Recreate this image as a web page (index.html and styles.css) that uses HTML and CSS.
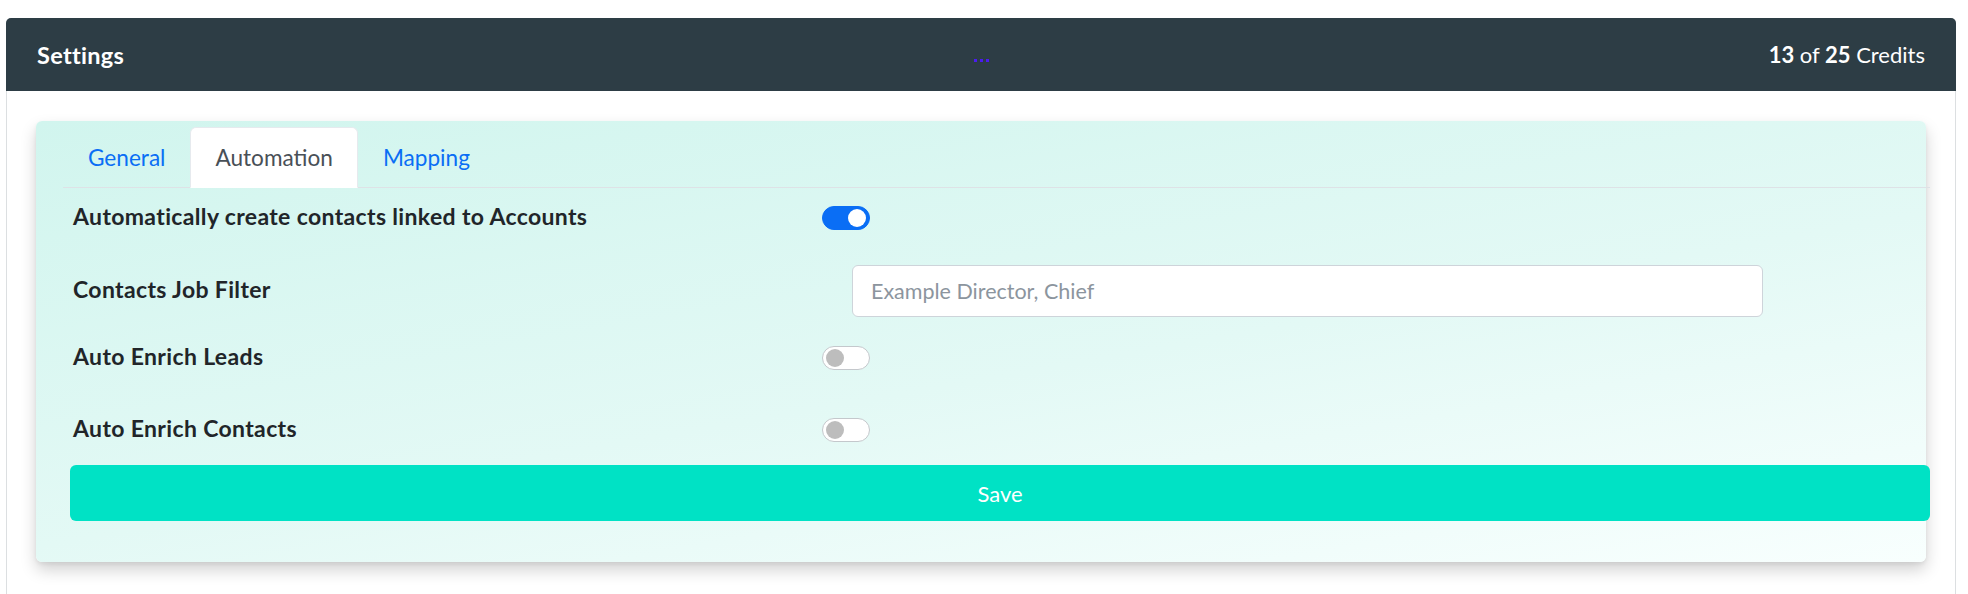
FILE: index.html
```html
<!DOCTYPE html>
<html lang="en">
<head>
    <meta charset="UTF-8">
    <meta name="viewport" content="width=device-width, initial-scale=1.0">
    <title>Settings</title>
    <link rel="stylesheet" href="styles.css">
</head>
<body>
    <div class="card">
        <div class="card-header">
            <span class="title">Settings</span>
            <span class="loader"><i></i><i></i><i></i></span>
            <span class="credits"><b>13</b> of <b>25</b> Credits</span>
        </div>
        <div class="card-body">
            <div class="panel">
                <div class="panel-content">
                    <ul class="tabs">
                        <li><a class="tab" href="#">General</a></li>
                        <li><a class="tab active" href="#">Automation</a></li>
                        <li><a class="tab" href="#">Mapping</a></li>
                    </ul>
                    <div class="field field-contacts">
                        <label>Automatically create contacts linked to Accounts</label>
                        <label class="switch"><input type="checkbox" checked><span class="slider"></span></label>
                    </div>
                    <div class="field field-filter">
                        <label for="jobFilter">Contacts Job Filter</label>
                        <input type="text" id="jobFilter" class="text-input" placeholder="Example Director, Chief">
                    </div>
                    <div class="field field-leads">
                        <label>Auto Enrich Leads</label>
                        <label class="switch"><input type="checkbox"><span class="slider"></span></label>
                    </div>
                    <div class="field field-enrich">
                        <label>Auto Enrich Contacts</label>
                        <label class="switch"><input type="checkbox"><span class="slider"></span></label>
                    </div>
                    <button class="save-button">Save</button>
                </div>
            </div>
        </div>
    </div>
</body>
</html>
```
FILE: styles.css
```css
body {
    margin: 0;
    padding: 18px 12px 0 6px;
    font-family: Lato, "Open Sans", sans-serif;
    font-size: 22px;
    background-color: #fff;
    color: #212529;
}
.card {
    border: 1px solid #dcdfe1;
    border-radius: 5px;
}
.card-header {
    margin: -1px -1px 0 -1px;
    height: 73px;
    box-sizing: border-box;
    padding: 0 31px;
    display: grid;
    grid-template-columns: 1fr auto 1fr;
    align-items: center;
    background-color: #2d3d45;
    color: #fff;
    border-radius: 5px 5px 0 0;
}
.title {
    font-weight: bold;
    font-size: 23.5px;
    letter-spacing: 0.3px;
}
.credits {
    justify-self: end;
}
.loader {
    display: flex;
    gap: 3px;
    margin-top: 11px;
}
.loader i {
    width: 3px;
    height: 3px;
    background-color: #4b1cf0;
}
.card-body {
    padding: 30px 29px 40px;
}
.panel {
    padding: 6px 0 41px 27px;
    border-radius: 6px;
    background: linear-gradient(170deg, #d1f5ee 0%, #e3f9f5 55%, #f8fffe 100%);
    box-shadow: 0 8px 16px rgba(0,0,0,0.18), 0 2px 4px rgba(0,0,0,0.06);
}
.panel-content {
    margin-right: -4px;
}
.tabs {
    list-style: none;
    margin: 0 0 12px 0;
    padding: 0;
    display: flex;
    border-bottom: 1px solid #dee2e6;
    font-size: 22.6px;
}
.tab {
    display: block;
    height: 61px;
    box-sizing: border-box;
    margin-bottom: -1px;
    padding: 0 24px;
    line-height: 59px;
    border: 1px solid transparent;
    border-radius: 6px 6px 0 0;
    color: #0a6ef5;
    text-decoration: none;
}
.tab.active {
    background-color: #fff;
    color: #495057;
    border-color: #e6eaee #e6eaee #fff;
}
.field {
    display: grid;
    grid-template-columns: 749px 1fr;
    align-items: center;
    padding-left: 10px;
    height: 36px;
    font-weight: bold;
    font-size: 23px;
    letter-spacing: 0.35px;
}
.field label:first-child {
    margin-bottom: 4px;
}
.field-filter {
    margin-top: 29px;
    height: 52px;
}
.field-leads {
    margin-top: 23px;
}
.field-enrich {
    margin-top: 36px;
}
.text-input {
    margin-left: 30px;
    width: 911px;
    height: 52px;
    box-sizing: border-box;
    padding: 0 18px;
    border: 1px solid #ced4da;
    border-radius: 6px;
    background-color: #fff;
    font-family: inherit;
    font-size: 21.5px;
    font-weight: normal;
    letter-spacing: 0;
    color: #495057;
}
.text-input::placeholder {
    color: #8c959e;
}
.switch {
    position: relative;
    display: block;
    width: 48px;
    height: 24px;
}
.switch input {
    display: none;
}
.slider {
    position: absolute;
    inset: 0;
    box-sizing: border-box;
    border: 1px solid #c4c8cc;
    border-radius: 12px;
    background-color: #fff;
}
.slider::before {
    content: "";
    position: absolute;
    left: 3px;
    top: 2px;
    width: 18px;
    height: 18px;
    border-radius: 50%;
    background-color: #bdbdbd;
}
.switch input:checked + .slider {
    background-color: #0a6ef5;
    border-color: #0a6ef5;
}
.switch input:checked + .slider::before {
    left: 25px;
    background-color: #fff;
}
.save-button {
    display: block;
    width: calc(100% - 7px);
    margin: 17px 0 0 7px;
    height: 56px;
    border: none;
    border-radius: 6px;
    background-color: #00e2c5;
    color: #fff;
    font-family: inherit;
    font-size: 22px;
    cursor: pointer;
}
```
